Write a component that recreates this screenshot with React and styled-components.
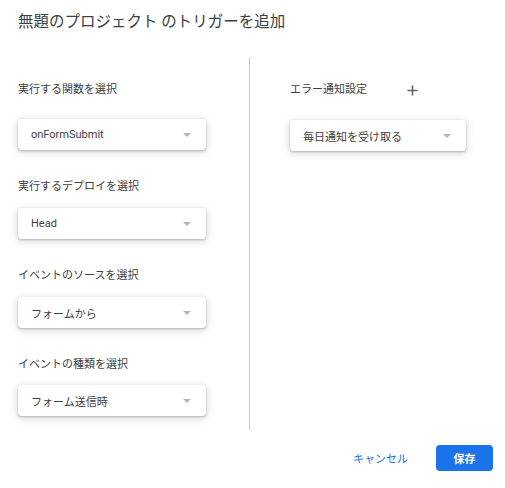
import React from "react";
import styled, { createGlobalStyle } from "styled-components";

const Global = createGlobalStyle`
  html, body { margin: 0; padding: 0; background: #fff; }
  body { font-family: Roboto, "Noto Sans CJK JP", "Noto Sans", sans-serif; }
  * { box-sizing: border-box; }
`;

const Dialog = styled.div`
  width: 505px;
  height: 488px;
  background: #fff;
  padding-top: 10px;
  display: flex;
  flex-direction: column;
`;

const Title = styled.h1`
  margin: 0;
  padding-left: 18px;
  font-size: 15.5px;
  line-height: 24px;
  font-weight: 400;
  color: #3c4043;
`;

const Body = styled.div`
  margin-top: 23px;
  height: 373px;
  display: flex;
`;

const LeftColumn = styled.div`
  width: 249px;
  flex-shrink: 0;
  padding: 25px 0 0 18px;
  display: flex;
  flex-direction: column;
`;

const Divider = styled.div`
  width: 1px;
  flex-shrink: 0;
  background: #c8c8c8;
`;

const RightColumn = styled.div`
  flex: 1;
  padding: 25px 0 0 40px;
  display: flex;
  flex-direction: column;
`;

const Group = styled.div`
  display: flex;
  flex-direction: column;
  margin-bottom: 29px;
`;

const Label = styled.div`
  font-size: 11px;
  line-height: 16px;
  color: #3c4043;
  margin-bottom: ${(p) => p.$gap}px;
`;

const LabelRow = styled.div`
  display: flex;
  align-items: center;
  margin-bottom: 22px;
`;

const PlusButton = styled.span`
  margin-left: 40px;
  width: 11px;
  height: 11px;
  display: inline-flex;
`;

const SelectBox = styled.div`
  width: ${(p) => p.$width}px;
  height: 31px;
  border-radius: 4px;
  background: #fff;
  box-shadow: 0 1px 2px rgba(60, 64, 67, 0.3), 0 2px 6px 2px rgba(60, 64, 67, 0.15);
  display: flex;
  align-items: center;
  justify-content: space-between;
  padding: 0 15px 0 13px;
  font-size: 11px;
  color: #3c4043;
`;

const Arrow = styled.span`
  width: 0;
  height: 0;
  border-left: 4px solid transparent;
  border-right: 4px solid transparent;
  border-top: 4px solid #b5b5b5;
`;

const Footer = styled.div`
  margin-top: 15px;
  display: flex;
  justify-content: flex-end;
  align-items: center;
  padding-right: 12px;
`;

const TextButton = styled.button`
  border: none;
  background: none;
  font-family: inherit;
  font-size: 11px;
  color: #1a73e8;
  padding: 0;
  margin-right: 28px;
  height: 26px;
`;

const PrimaryButton = styled.button`
  border: none;
  background: #1a73e8;
  color: #fff;
  font-family: inherit;
  font-size: 11px;
  font-weight: 700;
  width: 57px;
  height: 26px;
  border-radius: 4px;
  padding: 0;
`;

function Select({ value, width }) {
  return (
    <SelectBox $width={width}>
      <span>{value}</span>
      <Arrow />
    </SelectBox>
  );
}

const leftGroups = [
  { label: "実行する関数を選択", value: "onFormSubmit", gap: 21 },
  { label: "実行するデプロイを選択", value: "Head", gap: 13 },
  { label: "イベントのソースを選択", value: "フォームから", gap: 13 },
  { label: "イベントの種類を選択", value: "フォーム送信時", gap: 12 },
];

export default function App() {
  return (
    <>
      <Global />
      <Dialog>
        <Title>無題のプロジェクト のトリガーを追加</Title>
        <Body>
          <LeftColumn>
            {leftGroups.map((g) => (
              <Group key={g.label}>
                <Label $gap={g.gap}>{g.label}</Label>
                <Select value={g.value} width={188} />
              </Group>
            ))}
          </LeftColumn>
          <Divider />
          <RightColumn>
            <LabelRow>
              <Label $gap={0}>エラー通知設定</Label>
              <PlusButton>
                <svg width="11" height="11" viewBox="0 0 11 11">
                  <path d="M5.5 0.5v10M0.5 5.5h10" stroke="#5f6368" strokeWidth="1.6" />
                </svg>
              </PlusButton>
            </LabelRow>
            <Select value="毎日通知を受け取る" width={176} />
          </RightColumn>
        </Body>
        <Footer>
          <TextButton>キャンセル</TextButton>
          <PrimaryButton>保存</PrimaryButton>
        </Footer>
      </Dialog>
    </>
  );
}
